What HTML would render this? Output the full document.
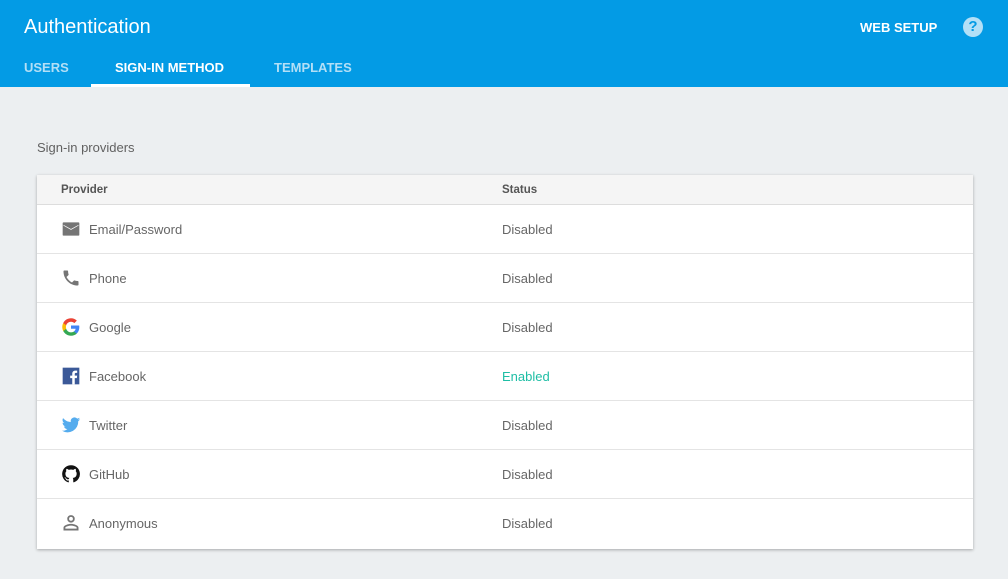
<!DOCTYPE html>
<html><head><style>
*{margin:0;padding:0;box-sizing:border-box}
body{width:1008px;height:579px;background:#eceff1;font-family:"Liberation Sans",sans-serif;position:relative;overflow:hidden}
.hdr{position:absolute;left:0;top:0;width:1008px;height:87px;background:#039be5}
.title{position:absolute;left:24px;top:16px;color:#fff;font-size:20px}
.ws{position:absolute;left:860px;top:20px;color:#fff;font-size:13px;font-weight:bold}
.help{position:absolute;left:963px;top:17px;width:20px;height:20px;border-radius:50%;background:#b3e0f7;color:#039be5;font-weight:bold;font-size:15px;text-align:center;line-height:20px}
.tab{position:absolute;top:60px;font-size:13px;font-weight:bold;color:#b3dff6}
.tab.a{color:#fff}
.ul{position:absolute;left:91px;top:84px;width:159px;height:3px;background:#fff}
.sp{position:absolute;left:37px;top:140px;font-size:13px;color:#616161}
.card{position:absolute;left:37px;top:175px;width:936px;height:374px;background:#fff;box-shadow:0 1px 3px rgba(0,0,0,.3)}
.th{height:30px;background:#f5f5f5;border-bottom:1px solid #ddd;font-size:11.5px;font-weight:bold;color:#555;position:relative}
.row{height:49px;border-bottom:1px solid #e4e4e4;position:relative;font-size:13px;color:#666}
.row:last-child{border-bottom:none}
.c1{position:absolute;left:52px}
.c2{position:absolute;left:465px}
.th .c1,.th .c2{top:9px}
.c1.l{left:24px}
.row .c1,.row .c2{top:17px}
.ic{position:absolute;left:24px;top:14px;width:20px;height:20px}
</style></head><body>
<div class="hdr">
<div class="title">Authentication</div>
<div class="ws">WEB SETUP</div>
<div class="help">?</div>
<div class="tab" style="left:24px">USERS</div>
<div class="tab a" style="left:115px">SIGN-IN METHOD</div>
<div class="tab" style="left:274px">TEMPLATES</div>
<div class="ul"></div>
</div>
<div class="sp">Sign-in providers</div>
<div class="card">
<div class="th"><span class="c1 l">Provider</span><span class="c2">Status</span></div>
<div class="row"><svg class="ic" viewBox="0 0 24 24"><path fill="#757575" d="M3 4h18a1 1 0 0 1 1 1v14a1 1 0 0 1-1 1H3a1 1 0 0 1-1-1V5a1 1 0 0 1 1-1zm0 3v1l9 5 9-5V7l-9 5z"/></svg><span class="c1">Email/Password</span><span class="c2">Disabled</span></div>
<div class="row"><svg class="ic" viewBox="0 0 24 24"><path fill="#757575" d="M6.6 10.8c1.4 2.8 3.8 5.1 6.6 6.6l2.2-2.2c.3-.3.7-.4 1-.2 1.1.4 2.3.6 3.600.6.6 0 1 .4 1 1V20c0 .6-.4 1-1 1C10.6 21 3 13.4 3 4c0-.6.4-1 1-1h3.5c.6 0 1 .4 1 1 0 1.3.2 2.5.6 3.6.1.3 0 .7-.2 1z"/></svg><span class="c1">Phone</span><span class="c2">Disabled</span></div>
<div class="row"><svg class="ic" viewBox="0 0 24 24"><path fill="#4285f4" d="M22 12.2c0-.7-.1-1.4-.2-2H12v3.9h5.6c-.2 1.3-1 2.4-2.1 3.1v2.6h3.4c2-1.8 3.1-4.5 3.1-7.6z"/><path fill="#34a853" d="M12 22.5c2.8 0 5.2-.9 6.9-2.5l-3.4-2.6c-.9.6-2.1 1-3.5 1-2.7 0-5-1.8-5.8-4.3H2.7v2.7c1.7 3.4 5.2 5.700 9.3 5.7z"/><path fill="#fbbc05" d="M6.2 14.1c-.2-.6-.3-1.3-.3-2.1s.1-1.4.3-2.1V7.2H2.7C2 8.6 1.5 10.3 1.5 12s.5 3.4 1.2 4.8z"/><path fill="#ea4335" d="M12 5.7c1.5 0 2.9.5 4 1.6l3-3C17.2 2.6 14.8 1.5 12 1.5c-4.1 0-7.6 2.3-9.3 5.7l3.5 2.7C7 7.5 9.3 5.7 12 5.7z"/></svg><span class="c1">Google</span><span class="c2">Disabled</span></div>
<div class="row"><svg class="ic" viewBox="0 0 24 24"><rect x="2" y="2" width="20" height="20" fill="#3b5998"/><path fill="#fff" d="M16.5 22v-7.5h2.5l.4-3h-2.9V9.7c0-.8.3-1.4 1.4-1.4h1.5V5.6c-.3 0-1.2-.1-2.2-.1-2.2 0-3.7 1.3-3.7 3.8v2.2H11v3h2.5V22z"/></svg><span class="c1">Facebook</span><span class="c2" style="color:#1ebea5">Enabled</span></div>
<div class="row"><svg class="ic" viewBox="0 0 24 24"><path fill="#55acee" d="M23 5.1c-.8.4-1.7.6-2.6.7.9-.6 1.6-1.4 2-2.5-.9.5-1.9.9-2.9 1.1a4.5 4.5 0 0 0-7.7 4.1C8 8.3 4.7 6.5 2.5 3.8c-1.2 2-.6 4.6 1.4 6-.7 0-1.4-.2-2-.6 0 2.2 1.5 4.1 3.6 4.5-.7.2-1.4.2-2 .1.6 1.8 2.3 3.1 4.2 3.1A9 9 0 0 1 1 18.8 12.8 12.8 0 0 0 20.7 7.4c.9-.6 1.7-1.4 2.3-2.3z"/></svg><span class="c1">Twitter</span><span class="c2">Disabled</span></div>
<div class="row"><svg class="ic" viewBox="0 0 24 24"><path fill="#111" d="M12 1.5a10.5 10.5 0 0 0-3.3 20.5c.5.1.7-.2.7-.5v-1.8c-2.9.6-3.5-1.4-3.5-1.4-.5-1.2-1.2-1.5-1.2-1.5-1-.7 0-.7 0-.7 1 .1 1.6 1.1 1.6 1.1.9 1.6 2.5 1.2 3.1.9.1-.7.4-1.1.7-1.4-2.3-.3-4.8-1.2-4.8-5.2 0-1.1.4-2.1 1.1-2.800-.1-.3-.5-1.3.1-2.8 0 0 .9-.3 2.9 1.1a10 10 0 0 1 5.3 0c2-1.4 2.9-1.1 2.9-1.1.6 1.5.2 2.5.1 2.8.7.7 1.1 1.7 1.1 2.8 0 4-2.5 4.9-4.8 5.2.4.3.7 1 .7 1.9v2.9c0 .3.2.6.7.5A10.5 10.5 0 0 0 12 1.5z"/></svg><span class="c1">GitHub</span><span class="c2">Disabled</span></div>
<div class="row"><svg class="ic" viewBox="0 0 24 24"><path fill="#757575" d="M12 2.5a4.5 4.5 0 1 1 0 9 4.5 4.5 0 0 1 0-9zm0 2.2a2.3 2.3 0 1 0 0 4.6 2.3 2.3 0 0 0 0-4.6zM12 13c3 0 9 1.5 9 4.5V21H3v-3.5C3 14.5 9 13 12 13zm0 2.2c-3.300 0-6.800 1.600-6.800 2.300v1.300h13.600v-1.300c0-.7-3.500-2.300-6.800-2.300z"/></svg><span class="c1">Anonymous</span><span class="c2">Disabled</span></div>
</div>
</body></html>
